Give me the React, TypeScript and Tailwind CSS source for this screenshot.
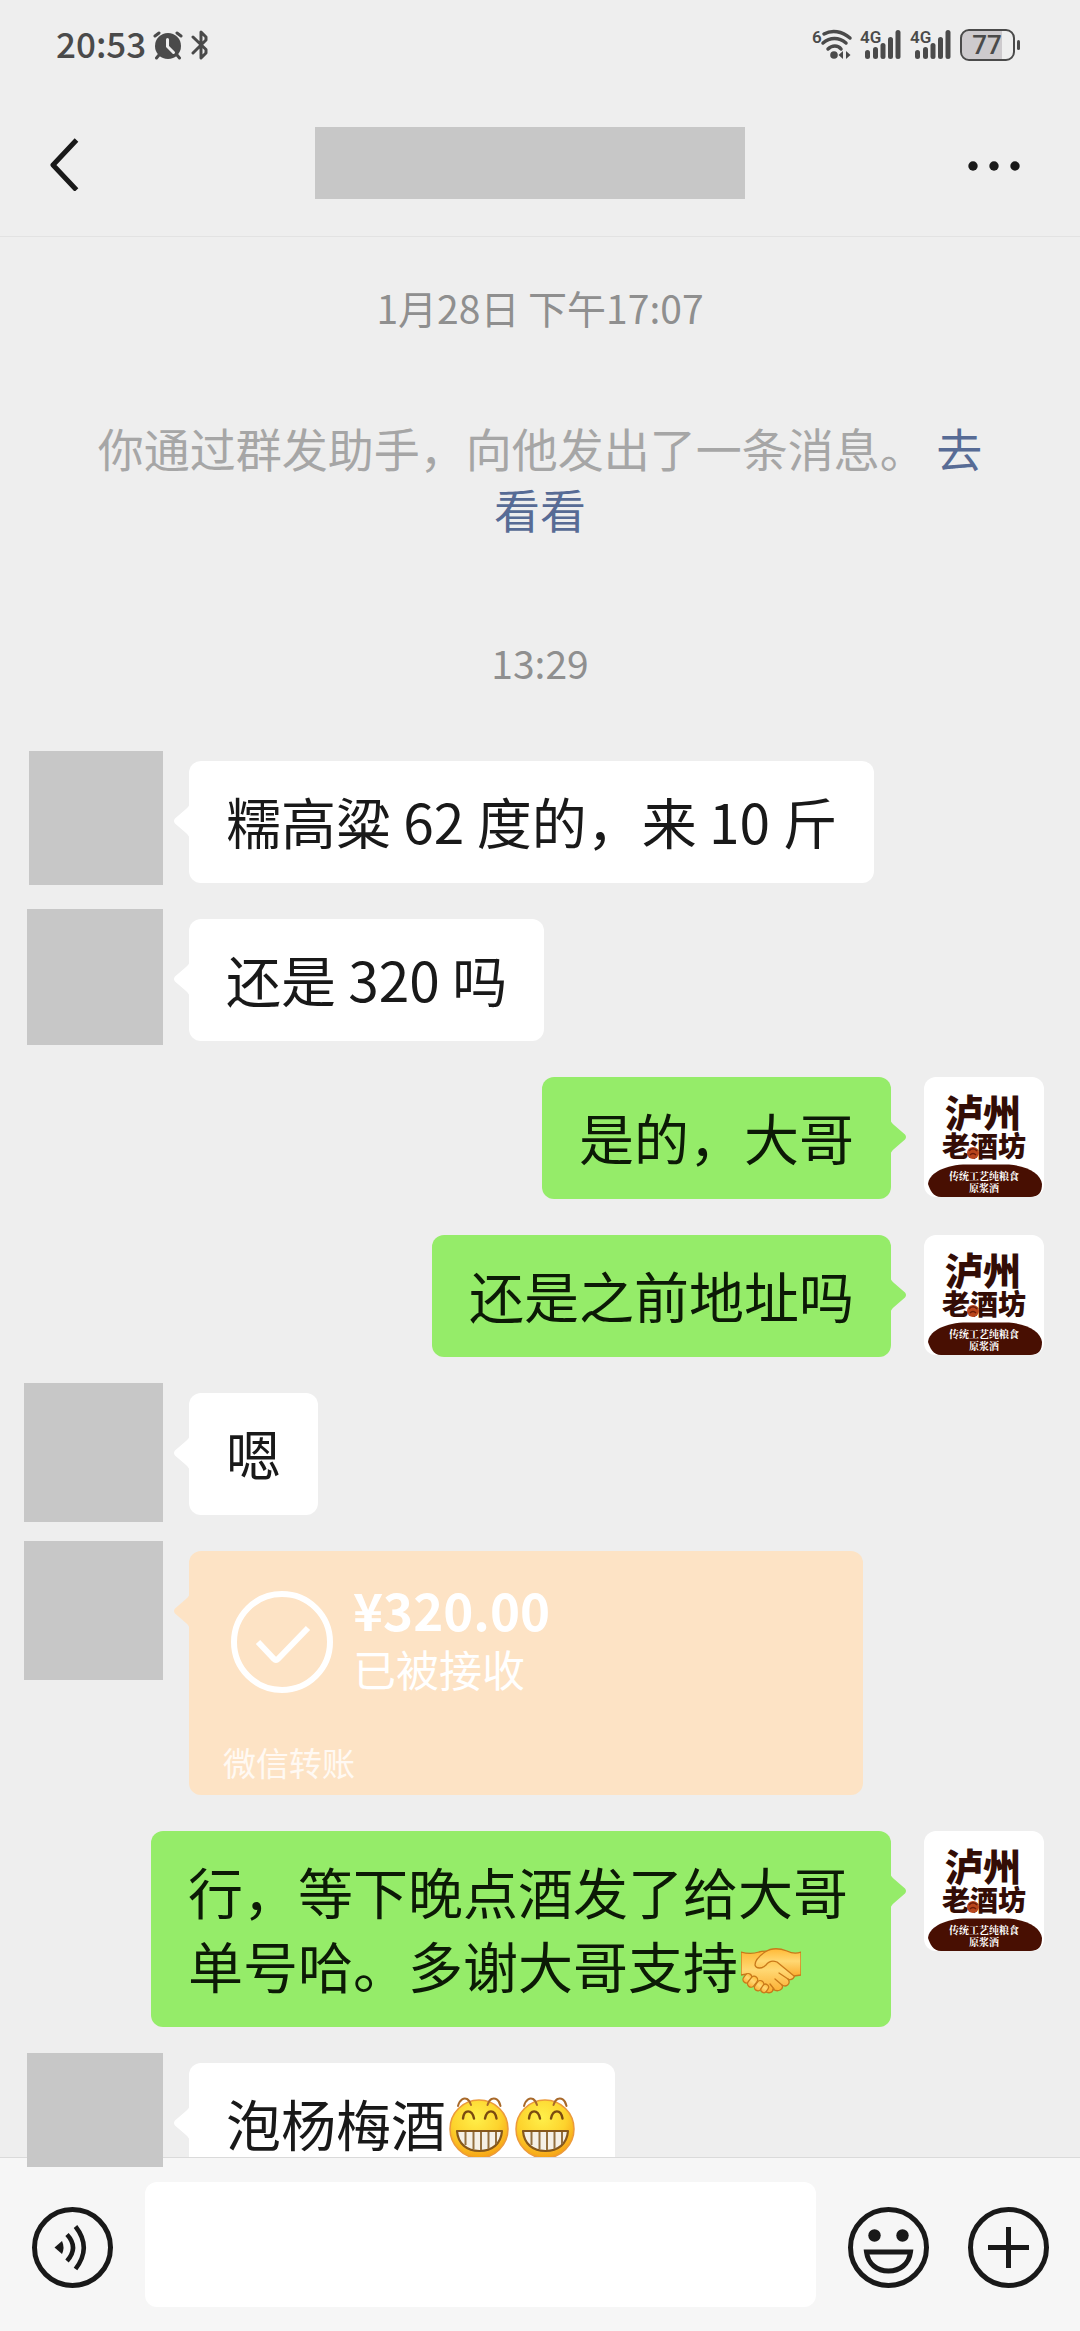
import React, { type ReactNode } from 'react';

type Message =
	| { id: string; kind: 'received'; avatarSize: string; content: ReactNode }
	| { id: string; kind: 'sent'; content: ReactNode }
	| { id: string; kind: 'transfer'; avatarSize: string; amount: string; status: string };

function GrinEmoji() {
	return (
		<svg
			role="img"
			aria-label="呲牙"
			viewBox="0 0 60 62"
			className="mx-[3px] inline-block h-[62px] w-[60px] align-[-13px]"
		>
			<defs>
				<radialGradient id="grin-face" cx="0.45" cy="0.3" r="0.75">
					<stop offset="0" stopColor="#fff04a" />
					<stop offset="0.55" stopColor="#fdd32d" />
					<stop offset="1" stopColor="#f59a12" />
				</radialGradient>
			</defs>
			<circle cx="30" cy="32" r="29" fill="url(#grin-face)" stroke="#ec9a3a" strokeWidth="1.5" />
			<g fill="none" stroke="#a8692a" strokeWidth="2" strokeLinecap="round">
				<path d="M9 9C11 2 15 .8 18 2C20 3 21 5 22 8" />
				<path d="M38.500 8C39.500 5 40.500 3 42.500 2C46 .8 50 2 51.500 9" />
			</g>
			<g fill="none" stroke="#7a4a10" strokeWidth="2.400" strokeLinecap="round">
				<path d="M14 21.500C15 12 23 12 25 21.500" />
				<path d="M36 21.500C38 12 46 12 47.500 21.500" />
			</g>
			<path
				d="M8 34H53C52 47 43 54 30.500 54S9 47 8 34Z"
				fill="#f5f0e6"
				stroke="#85571c"
				strokeWidth="2.200"
				strokeLinejoin="round"
			/>
			<path
				d="M16.500 35V48M24.500 35V52M32 35V53M39.500 35V52M47 35V47"
				stroke="#94703f"
				strokeWidth="2"
			/>
		</svg>
	);
}

function HandshakeEmoji() {
	return (
		<svg
			role="img"
			aria-label="握手"
			viewBox="0 0 60 46"
			className="mx-[3px] inline-block h-[46px] w-[60px] align-[-6px]"
		>
			<defs>
				<linearGradient id="shake-skin" x1="0" y1="0" x2="0" y2="1">
					<stop offset="0" stopColor="#ffb936" />
					<stop offset="0.45" stopColor="#ffd873" />
					<stop offset="1" stopColor="#fbad30" />
				</linearGradient>
			</defs>
			<g fill="url(#shake-skin)" stroke="#c9791a" strokeWidth="1.300" strokeLinejoin="round">
				<path d="M0 4C7 6 12 6 18 4C26 2 34 4 40 10L53 25C55 29 51 33 47 31C50 35 46 40 41 37C43 41 37 45 32 41C32 45 27 46 24 43L6 26L0 27Z" />
				<path d="M60 4C55 6 50 5 46 3C38 0 30 0 24 4C18 8 14 13 14 17C15 21 21 21 25 17C28 13 31 12 36 14L53 28L60 27Z" />
				<rect x="3" y="25" width="7" height="10" rx="3.500" transform="rotate(38 6 30)" />
				<rect x="8" y="28" width="7" height="12" rx="3.500" transform="rotate(38 12 34)" />
				<rect x="15" y="32" width="7" height="11" rx="3.500" transform="rotate(36 18 37)" />
				<rect x="21" y="36" width="6" height="9" rx="3" transform="rotate(34 24 40)" />
			</g>
			<g fill="none" stroke="#c9791a" strokeWidth="1.300" strokeLinecap="round">
				<path d="M38 25L47 31M34 31L41 37M29 36L33 41" />
			</g>
		</svg>
	);
}

function ShopAvatar() {
	return (
		<svg
			role="img"
			aria-label="泸州老酒坊"
			viewBox="0 0 120 120"
			className="size-[120px] shrink-0 rounded-xl bg-white"
		>
			<g fill="#330d06" fontFamily='"Noto Sans CJK SC", sans-serif' fontWeight="900" textAnchor="middle">
				<text x="59" y="50" fontSize="38">泸州</text>
				<text x="60" y="80" fontSize="28">老酒坊</text>
			</g>
			<circle cx="49" cy="76" r="6" fill="#b8451c" />
			<path d="M45 74C47 71 51 71 53 74M46 78C48 76 50 76 52 78" fill="none" stroke="#6d1c08" strokeWidth="1.500" />
			<path
				d="M4 107C5 97 18 89 39 87.500H85C104 89 117 97 118 107C118 115 115 120 106 120H17C9 120 6 113 4 107Z"
				fill="#480f02"
			/>
			<g fill="#fff" fontFamily='"Noto Serif CJK SC", "Noto Sans CJK SC", serif' fontWeight="700" textAnchor="middle">
				<text x="60" y="103" fontSize="10">传统工艺纯粮食</text>
				<text x="60" y="115" fontSize="10">原浆酒</text>
			</g>
		</svg>
	);
}

function Tail({ className }: { className: string }) {
	return (
		<svg viewBox="0 0 17 36" aria-hidden="true" className={`absolute h-9 w-[17px] ${className}`}>
			<path d="M17 0C16 3 15 4 13 6L2 15.500Q0 18 2 20.500L13 30C15 32 16 33 17 36Z" fill="currentColor" />
		</svg>
	);
}

function HiddenAvatar({ size }: { size: string }) {
	return (
		<div className="mr-[26px] flex h-[120px] w-[163px] shrink-0 justify-end">
			<div className={`relative z-20 -mt-2.5 shrink-0 bg-[#c7c7c7] ${size}`} />
		</div>
	);
}

const MESSAGES: ReadonlyArray<Message> = [
	{ id: 'm1', kind: 'received', avatarSize: 'size-[134px]', content: '糯高粱 62 度的，来 10 斤' },
	{ id: 'm2', kind: 'received', avatarSize: 'size-[136px]', content: '还是 320 吗' },
	{ id: 'm3', kind: 'sent', content: '是的，大哥' },
	{ id: 'm4', kind: 'sent', content: '还是之前地址吗' },
	{ id: 'm5', kind: 'received', avatarSize: 'size-[139px]', content: '嗯' },
	{ id: 'm6', kind: 'transfer', avatarSize: 'size-[139px]', amount: '¥320.00', status: '已被接收' },
	{
		id: 'm7',
		kind: 'sent',
		content: (
			<>
				行，等下晚点酒发了给大哥单号哈。多谢大哥支持
				<HandshakeEmoji />
			</>
		)
	},
	{
		id: 'm8',
		kind: 'received',
		avatarSize: 'h-[114px] w-[136px]',
		content: (
			<>
				泡杨梅酒
				<GrinEmoji />
				<GrinEmoji />
			</>
		)
	}
];

function MessageRow({ message }: { message: Message }) {
	if (message.kind === 'sent') {
		return (
			<li className="flex items-start justify-end gap-[33px] pr-9">
				<div className="relative max-w-[740px] rounded-xl bg-[#95ec69] px-[37px] pt-[22px] pb-[26px] text-[55px] leading-[74px] text-[#0c1a06]">
					<Tail className="top-[42px] -right-4 rotate-180 text-[#95ec69]" />
					{message.content}
				</div>
				<ShopAvatar />
			</li>
		);
	}

	if (message.kind === 'transfer') {
		return (
			<li className="flex items-start">
				<HiddenAvatar size={message.avatarSize} />
				<div className="relative flex h-[244px] w-[674px] flex-col justify-between rounded-xl bg-[#fde3c5] pr-8 pb-2 pl-[34px] text-white">
					<Tail className="top-[42px] -left-4 text-[#fde3c5]" />
					<div className="flex items-center gap-5 pt-7 pl-2">
						<svg viewBox="0 0 102 102" className="size-[102px]" fill="none" stroke="currentColor" strokeWidth="6" aria-hidden="true">
							<circle cx="51" cy="51" r="48" />
							<path d="M27 51L43 68Q45 70 47 68L77 37" />
						</svg>
						<div className="pb-2">
							<p className="text-[51px] leading-[60px] font-bold">{message.amount}</p>
							<p className="text-[43px] leading-[58px]">{message.status}</p>
						</div>
					</div>
					<p className="text-[33px] leading-[50px] text-white/80">微信转账</p>
				</div>
			</li>
		);
	}

	return (
		<li className="flex items-start">
			<HiddenAvatar size={message.avatarSize} />
			<div className="relative rounded-xl bg-white px-[37px] pt-[22px] pb-[26px] text-[55px] leading-[74px] text-[#191919]">
				<Tail className="top-[42px] -left-4 text-white" />
				{message.content}
			</div>
		</li>
	);
}

function SignalIcon() {
	return (
		<svg viewBox="0 0 42 32" className="h-8 w-[42px] overflow-visible" fill="#4a4a4a" role="img" aria-label="4G">
			<text x="0" y="14" fontSize="17" fontWeight="600" fontFamily="Roboto, sans-serif">
				4G
			</text>
			<rect x="5" y="21" width="5" height="9" rx="2.500" />
			<rect x="13" y="18" width="5" height="12" rx="2.500" />
			<rect x="20.500" y="14" width="5" height="16" rx="2.500" />
			<rect x="28" y="8" width="5" height="22" rx="2.500" />
			<rect x="35.500" y="1" width="5" height="29" rx="2.500" />
		</svg>
	);
}

function StatusBar() {
	return (
		<div className="flex h-[90px] shrink-0 items-center justify-between pr-[60px] pl-14 text-[#4a4a4a]">
			<div className="flex items-center gap-[7px]">
				<span className="pb-1 text-[35px] leading-[48px] font-medium">20:53</span>
				<svg viewBox="0 0 30 30" className="size-[30px]" fill="none" stroke="currentColor" strokeWidth="3" strokeLinecap="round" aria-hidden="true">
					<circle cx="15" cy="16" r="13" fill="currentColor" stroke="none" />
					<path d="M2 6L6 3M28 6L24 3M6 25L3.500 28M24 25L26.500 28" />
					<path d="M14.500 9.500V16.500L20.500 22.500" stroke="#eee" />
				</svg>
				<svg viewBox="0 0 20 30" className="h-[30px] w-5" fill="none" stroke="currentColor" strokeWidth="3" strokeLinecap="round" strokeLinejoin="round" aria-hidden="true">
					<path d="M3 7L16 19.500V23L11 28V2L16 7V10L3 23" />
				</svg>
			</div>
			<div className="flex items-center gap-2">
				<svg viewBox="0 0 42 32" className="h-8 w-[42px] overflow-visible" fill="none" stroke="#4a4a4a" strokeWidth="3.500" strokeLinecap="round" role="img" aria-label="Wi-Fi 6">
					<text x="2" y="14" fontSize="17" fontWeight="600" fill="#4a4a4a" stroke="none" fontFamily="Roboto, sans-serif">
						6
					</text>
					<path d="M14 5C22 .5 32 2 40 9M13 14C20 8 29 8 36 14M18 20C22 16 28 16 31 20" />
					<circle cx="24" cy="26" r="3.800" fill="#4a4a4a" stroke="none" />
					<path d="M33 22V30L28.500 26ZM36 22V30L40.500 26Z" fill="#4a4a4a" stroke="none" />
				</svg>
				<SignalIcon />
				<SignalIcon />
				<svg viewBox="0 0 60 32" className="h-8 w-[60px] overflow-visible" role="img" aria-label="77">
					<path d="M10 2H42V30H10Q2 30 2 22V10Q2 2 10 2Z" fill="#cdcacd" />
					<rect x="1" y="1" width="53" height="30" rx="8" fill="none" stroke="#4a4a4a" strokeWidth="2" />
					<rect x="57" y="11" width="3" height="10" rx="1.500" fill="#4a4a4a" />
					<text x="27" y="25" fontSize="26" fontWeight="500" textAnchor="middle" fill="#4a4a4a" fontFamily="Roboto, sans-serif">
						77
					</text>
				</svg>
			</div>
		</div>
	);
}

export default function App() {
	return (
		<div className="flex h-screen flex-col overflow-hidden bg-[#eeeeee] font-['Noto_Sans_CJK_SC',sans-serif]">
			<StatusBar />

			<header className="grid h-[147px] shrink-0 grid-cols-[1fr_430px_1fr] items-center border-b border-[#e2e2e2] pr-[60px] pl-10 text-[#191919]">
				<button type="button" aria-label="返回" className="justify-self-start">
					<svg viewBox="0 0 48 56" className="h-14 w-12" fill="none" stroke="currentColor" strokeWidth="5" strokeLinejoin="round">
						<path d="M36.500 5L13 30L36.500 55" />
					</svg>
				</button>
				<div className="h-[72px] bg-[#c7c7c7]" />
				<button type="button" aria-label="更多" className="justify-self-end">
					<svg viewBox="0 0 52 56" className="h-14 w-[52px]" fill="currentColor">
						<circle cx="5" cy="31" r="4.700" />
						<circle cx="26" cy="31" r="4.700" />
						<circle cx="47" cy="31" r="4.700" />
					</svg>
				</button>
			</header>

			<main className="min-h-0 flex-1 pt-10">
				<p className="text-center text-[39px] leading-[60px] text-[#8f8f8f]">1月28日 下午17:07</p>
				<p className="mt-20 px-20 text-center text-[46px] leading-[61px] text-[#a6a6a6]">
					你通过群发助手，向他发出了一条消息。{' '}
					<a href="#broadcast" className="text-[#576b95]">
						去看看
					</a>
				</p>
				<p className="mt-[93px] text-center text-[39px] leading-[60px] text-[#8f8f8f]">13:29</p>

				<ul className="mt-[69px] flex flex-col gap-9">
					{MESSAGES.map((message) => (
						<MessageRow key={message.id} message={message} />
					))}
				</ul>
			</main>

			<footer className="relative z-10 flex shrink-0 items-center gap-8 border-t border-[#dadada] bg-[#f6f6f6] py-6 pr-[31px] pl-8 text-[#191919]">
				<button type="button" aria-label="语音" className="pt-1.5">
					<svg viewBox="0 0 81 81" className="size-[81px]" fill="none" stroke="currentColor" strokeWidth="5" aria-hidden="true">
						<circle cx="40.500" cy="40.500" r="38" />
						<path d="M30 34L22.500 40.500L30 47Q33 40.500 30 34Z" fill="currentColor" stroke="none" />
						<path d="M35 27.500Q47 40.500 35 54M43.500 19.500Q60 40.500 43.500 62" strokeWidth="4.500" />
					</svg>
				</button>
				<input
					type="text"
					aria-label="输入消息"
					className="h-[125px] min-w-0 flex-1 rounded-xl bg-white px-6 text-[50px] outline-none"
				/>
				<div className="flex items-center gap-[39px] pt-1.5">
					<button type="button" aria-label="表情">
						<svg viewBox="0 0 81 81" className="size-[81px]" fill="none" stroke="currentColor" strokeWidth="5" aria-hidden="true">
							<circle cx="40.500" cy="40.500" r="38" />
							<circle cx="26.500" cy="28.500" r="6.200" fill="currentColor" stroke="none" />
							<circle cx="54.500" cy="28.500" r="6.200" fill="currentColor" stroke="none" />
							<path d="M18.500 45H62.500C61 57 52 64 40.500 64S20 57 18.500 45Z" />
						</svg>
					</button>
					<button type="button" aria-label="更多功能">
						<svg viewBox="0 0 81 81" className="size-[81px]" fill="none" stroke="currentColor" strokeWidth="5" aria-hidden="true">
							<circle cx="40.500" cy="40.500" r="38" />
							<path d="M20 40.500H61M40.500 20V61" />
						</svg>
					</button>
				</div>
			</footer>
		</div>
	);
}
